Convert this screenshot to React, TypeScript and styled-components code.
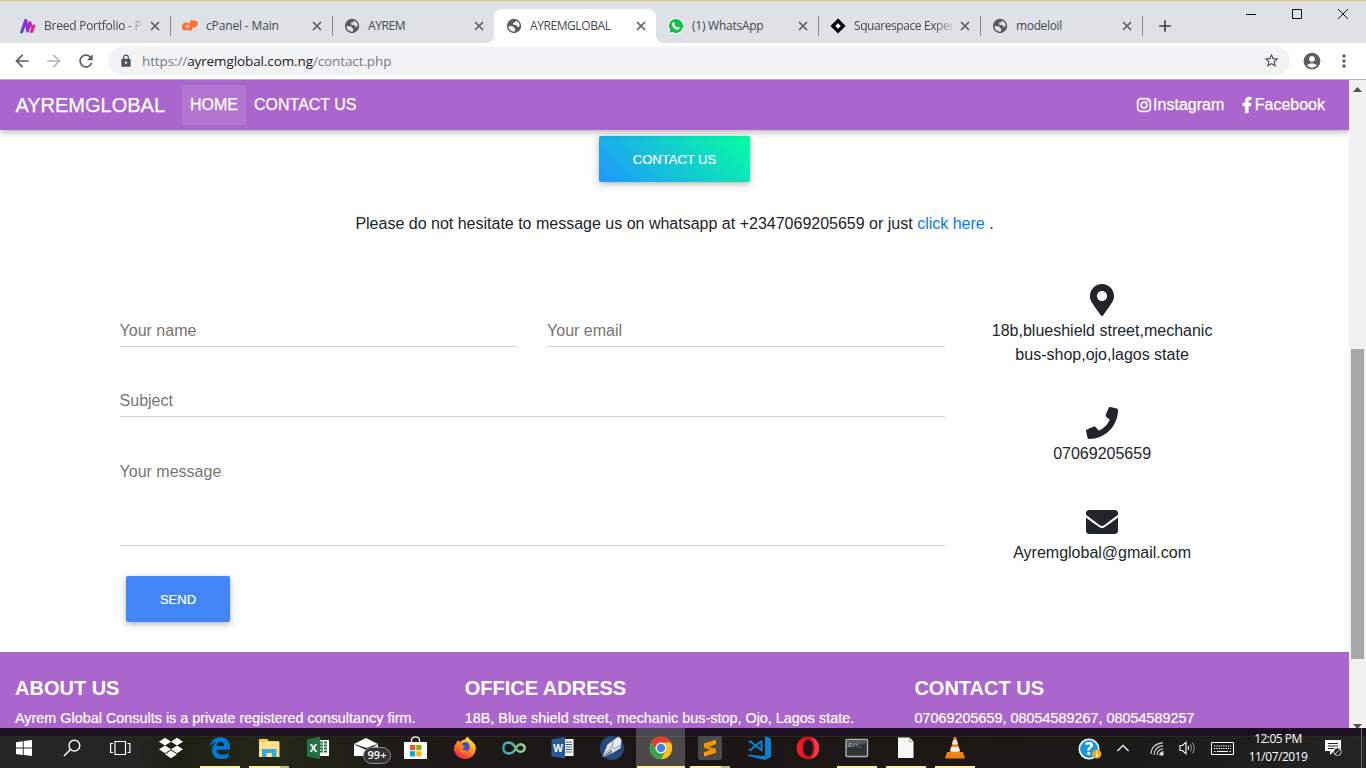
import React from "react";
import styled, { createGlobalStyle } from "styled-components";
import { FaInstagram, FaFacebookF, FaMapMarkerAlt, FaPhone, FaEnvelope, FaDropbox } from "react-icons/fa";
import { MdArrowBack, MdArrowForward, MdRefresh, MdLock, MdStarBorder, MdAccountCircle, MdMoreVert, MdAdd } from "react-icons/md";

const Global = createGlobalStyle`
  * { box-sizing: border-box; }
  body { margin: 0; overflow: hidden; background: #fff; }
`;

const ui = `"Open Sans", "Noto Sans", sans-serif`;
const body = `"Liberation Sans", Arial, sans-serif`;

const Screen = styled.div`
  width: 1366px;
  height: 768px;
  display: flex;
  flex-direction: column;
  overflow: hidden;
  font-family: ${body};
  color: #212529;
`;

/* ---------- browser chrome ---------- */
const TabStrip = styled.div`
  height: 43px;
  flex: none;
  display: flex;
  align-items: flex-end;
  background: #dee1e6;
  border-top: 1px solid #d9c762;
  padding-left: 8px;
  font-family: ${ui};
`;
const Tab = styled.div<{ $line?: boolean }>`
  position: relative;
  width: 162px;
  height: 34px;
  flex: none;
  display: flex;
  align-items: center;
  padding-left: 12px;
  &::after {
    content: "";
    position: absolute;
    right: -1px;
    top: 7px;
    width: 1px;
    height: 20px;
    background: ${(p) => (p.$line ? "#85888d" : "transparent")};
  }
  & > svg { flex: none; }
`;
const ActiveTab = styled(Tab)`
  border-radius: 8px 8px 0 0;
  background: #fff;
  &::before, &::after {
    content: "";
    position: absolute;
    top: auto;
    bottom: 0;
    width: 7px;
    height: 7px;
  }
  &::before {
    left: -7px;
    background: radial-gradient(circle at 0 0, transparent 6.5px, #fff 7px);
  }
  &::after {
    right: -7px;
    background: radial-gradient(circle at 100% 0, transparent 6.5px, #fff 7px);
  }
`;
const Favicon = styled.svg`
  width: 16px;
  height: 16px;
`;
const TabTitle = styled.div<{ $ls?: number; $fade?: boolean }>`
  width: 98px;
  margin-left: 8px;
  font-size: 12px;
  line-height: 16px;
  white-space: nowrap;
  color: #45494d;
  letter-spacing: ${(p) => p.$ls ?? 0}px;
  mask-image: ${(p) => (p.$fade ? "linear-gradient(90deg, #000 82%, transparent 104%)" : "none")};
`;
const CloseIcon = styled.svg`
  width: 14px;
  height: 14px;
  margin-left: 6px;
`;
const NewTab = styled(MdAdd)`
  width: 20px;
  height: 20px;
  margin: 0 0 7px 13px;
  color: #3c4043;
`;
const WindowButtons = styled.svg`
  width: 110px;
  height: 20px;
  margin: 0 10px 18px auto;
`;
const Toolbar = styled.div`
  height: 37px;
  flex: none;
  display: flex;
  align-items: center;
  padding: 0 12px 1px;
  background: #fff;
  border-bottom: 1px solid #b3b3b3;
  color: #5a5d61;
  & > svg { width: 20px; height: 20px; flex: none; margin-right: 12px; }
`;
const Omnibox = styled.div`
  flex: none;
  width: 1182px;
  height: 28px;
  display: flex;
  align-items: center;
  border-radius: 14px;
  background: #f1f3f4;
  padding: 0 10px 0 11px;
  margin-right: 12px;
  font: 13.5px/20px ${ui};
  color: #777b80;
  & > svg { color: #505357; }
`;
const Url = styled.span`
  margin-left: 9px;
  flex: 1;
  letter-spacing: -0.11px;
  b { font-weight: 400; color: #202124; }
`;

/* ---------- page ---------- */
const Viewport = styled.div`
  height: 648px;
  flex: none;
  display: flex;
`;
const Page = styled.div`
  width: 1349px;
  display: flex;
  flex-direction: column;
  overflow: hidden;
`;
const Navbar = styled.nav`
  position: relative;
  height: 50px;
  flex: none;
  display: flex;
  align-items: center;
  padding: 0 24px 0 15.4px;
  background: #aa66cc;
  color: #fff;
  font-size: 16px;
  -webkit-text-stroke: 0.25px #fff;
  box-shadow: 0 2px 5px rgba(0, 0, 0, 0.18), 0 2px 10px rgba(0, 0, 0, 0.14);
`;
const Brand = styled.span`
  width: 150.6px;
  margin-right: 16px;
  font-size: 20px;
  white-space: nowrap;
`;
const NavItem = styled.span<{ $active?: boolean }>`
  padding: 8px;
  line-height: 24px;
  background: ${(p) => (p.$active ? "rgba(255,255,255,.1)" : "transparent")};
`;
const Social = styled.span<{ $icon: number }>`
  display: flex;
  align-items: center;
  gap: 2.5px;
  margin-left: 18px;
  svg { width: ${(p) => p.$icon}px; height: 16px; stroke: #fff; stroke-width: 14px; overflow: visible; }
`;
const Spacer = styled.div`
  flex: 1;
`;
const Button = styled.button<{ $gradient?: boolean }>`
  display: block;
  flex: none;
  width: ${(p) => (p.$gradient ? 151 : 104)}px;
  height: 46px;
  padding: 1px 0 0;
  border: 0;
  border-radius: 2px;
  color: #fff;
  font: 13px/21px ${body};
  -webkit-text-stroke: 0.2px #fff;
  background: ${(p) => (p.$gradient ? "linear-gradient(45deg, #2096ff, #05ffa3)" : "#4285f4")};
  box-shadow: 0 2px 5px rgba(0, 0, 0, 0.18), 0 2px 10px rgba(0, 0, 0, 0.14);
`;
const Intro = styled.section`
  height: 154px;
  flex: none;
  display: flex;
  flex-direction: column;
  align-items: center;
  padding-top: 6px;
`;
const Lead = styled.p`
  margin: 30px 0 0;
  font-size: 16px;
  line-height: 24px;
  a { color: #007bff; }
`;
const ContactArea = styled.section`
  height: 368px;
  flex: none;
  display: flex;
  padding-left: 119.6px;
`;
const Form = styled.form`
  width: 825px;
  display: flex;
  flex-direction: column;
  gap: 35px;
  padding-top: 28px;
`;
const FieldRow = styled.div`
  display: flex;
  gap: 30px;
`;
const Field = styled.label<{ $tall?: boolean }>`
  display: block;
  flex: 1;
  height: ${(p) => (p.$tall ? 94 : 35)}px;
  padding-top: ${(p) => (p.$tall ? 8 : 7)}px;
  border-bottom: 1px solid #ced4da;
  font-size: 16px;
  line-height: 24px;
  color: #757575;
`;
const SendRow = styled.div`
  margin-top: -5px;
  padding-left: 6.4px;
`;
const Details = styled.div`
  width: 315px;
  display: flex;
  flex-direction: column;
  align-items: center;
  text-align: center;
  font-size: 16px;
  line-height: 24px;
`;
const Detail = styled.div<{ $gap: number }>`
  display: flex;
  flex-direction: column;
  align-items: center;
  margin-bottom: ${(p) => p.$gap}px;
  svg { width: 32px; height: 32px; margin-bottom: 3px; }
`;
const Footer = styled.footer`
  flex: 1;
  display: flex;
  padding: 24px 15px 0;
  background: #aa66cc;
  color: #fff;
`;
const FooterColumn = styled.div`
  width: 449.7px;
  flex: none;
  h5 { margin: 0 0 8px; font: bold 20px/24px ${body}; }
  p { margin: 0; font-size: 14.4px; line-height: 21.6px; white-space: nowrap; -webkit-text-stroke: 0.2px #fff; }
`;
const Scrollbar = styled.div`
  width: 17px;
  display: flex;
  flex-direction: column;
  align-items: center;
  background: #f1f1f1;
  & > svg { flex: none; width: 9px; height: 5px; margin-top: 7px; }
  & > svg:last-child { margin-top: 65px; }
`;
const Thumb = styled.div`
  flex: none;
  width: 13px;
  height: 310px;
  margin-top: 257px;
  background: #a8a8a8;
`;

/* ---------- taskbar ---------- */
const Taskbar = styled.div`
  position: relative;
  height: 40px;
  flex: none;
  display: flex;
  background: linear-gradient(#1c1020 0 8px, #2a2a14 8px 9px, transparent 9px),
    linear-gradient(90deg, #262626 0, #242524 10%, #1d2113 13%, #252718 20%, #1d1a18 30%, #1b1615 50%, #1d1715 72%, #1a1b1b 85%, #242424 100%);
  font-family: ${ui};
  color: #fff;
`;
const Task = styled.div<{ $w?: number; $run?: boolean; $focus?: boolean; $stack?: boolean }>`
  position: relative;
  width: ${(p) => p.$w ?? 49}px;
  height: 40px;
  flex: none;
  display: flex;
  align-items: center;
  justify-content: center;
  background: ${(p) => (p.$focus ? "rgba(255,255,255,.22)" : "transparent")};
  & > svg { width: 24px; height: 24px; overflow: visible; }
  &::after {
    content: "";
    position: absolute;
    left: ${(p) => (p.$focus ? 1 : 5)}px;
    bottom: 0;
    width: ${(p) => (p.$focus ? 48 : p.$run ? 40 : 0)}px;
    height: 2px;
    background: ${(p) => (p.$stack ? "linear-gradient(90deg, #fdf1a8 31px, #bdb788 31px)" : "#fdf1a8")};
  }
`;
const Count = styled.span`
  position: absolute;
  left: 21px;
  top: 19px;
  width: 28px;
  height: 17px;
  border: 1px solid #8c8c8c;
  border-radius: 9px;
  background: #333;
  font: 600 11px/14px ${ui};
  text-align: center;
`;
const Tray = styled.div`
  display: flex;
  align-items: center;
  margin-left: auto;
`;
const TrayItem = styled.div<{ $w: number }>`
  width: ${(p) => p.$w}px;
  display: flex;
  justify-content: center;
  flex: none;
  svg { overflow: visible; }
`;
const Clock = styled.div`
  width: 72px;
  font-size: 12px;
  line-height: 18px;
  text-align: center;
  white-space: nowrap;
  letter-spacing: -0.5px;
`;
const ShowDesktop = styled.div`
  width: 5px;
  height: 40px;
  margin-left: 9px;
  border-left: 1px solid #6b6b6b;
`;

const CloseTab = () => (
  <CloseIcon viewBox="0 0 14 14">
    <path d="M3 3L11 11M11 3L3 11" fill="none" stroke="#5a5d61" strokeWidth="1.7" />
  </CloseIcon>
);

const Globe = ({ bg = "#dee1e6" }: { bg?: string }) => (
  <Favicon viewBox="0 0 16 16">
    <circle cx="8" cy="8" r="7.2" fill="#5a5d61" />
    <path d="M2.3 8.2L6.2 8.2Q8.3 8.6 8.3 10.2L9.3 10.8L8.6 13.7Q3.2 13.6 2.3 8.2Z" fill={bg} />
    <path d="M9.6 2.5Q13.4 4 13.7 7.6L12.4 9.2Q11 8.8 10.6 7.2L7.4 6.7Q6.2 5.6 7.6 4.6L9.6 4.2Z" fill={bg} />
  </Favicon>
);

const ContactDetail = ({ icon, lines, gap }: { icon: React.ReactNode; lines: string[]; gap: number }) => (
  <Detail $gap={gap}>
    {icon}
    {lines.map((l) => (
      <span key={l}>{l}</span>
    ))}
  </Detail>
);

const BrowserTabs = () => (
  <TabStrip>
    <Tab $line>
      <Favicon viewBox="0 0 16 16">
        <defs>
          <linearGradient id="breed" gradientUnits="userSpaceOnUse" x1="1" x2="15" y1="0" y2="0">
            <stop stopColor="#4a45e8" />
            <stop offset=".5" stopColor="#a52cc0" />
            <stop offset="1" stopColor="#ff1d8e" />
          </linearGradient>
        </defs>
        <path d="M1.7 14L5.8 2.3L7.6 13L10 4.6L10.8 8M11.6 13.6L13.8 8" fill="none" stroke="url(#breed)" strokeWidth="3" strokeLinecap="round" strokeLinejoin="round" />
      </Favicon>
      <TabTitle $fade $ls={-0.24}>Breed Portfolio - P</TabTitle>
      <CloseTab />
    </Tab>
    <Tab $line>
      <Favicon viewBox="0 0 16 16">
        <g fill="#ff6c2c" stroke="#ff6c2c" strokeWidth=".9" fontFamily="Open Sans" fontWeight="800" fontStyle="italic">
          <text x="0" y="12.2" fontSize="12" textLength="6.6" lengthAdjust="spacingAndGlyphs">c</text>
          <text x="6.6" y="12.4" fontSize="12.5" textLength="9" lengthAdjust="spacingAndGlyphs">P</text>
        </g>
      </Favicon>
      <TabTitle $ls={-0.15}>cPanel - Main</TabTitle>
      <CloseTab />
    </Tab>
    <Tab>
      <Globe />
      <TabTitle $ls={-0.4}>AYREM</TabTitle>
      <CloseTab />
    </Tab>
    <ActiveTab>
      <Globe bg="#fff" />
      <TabTitle $ls={-0.42}>AYREMGLOBAL</TabTitle>
      <CloseTab />
    </ActiveTab>
    <Tab $line>
      <Favicon viewBox="0 0 16 16">
        <path d="M8 0A8 8 0 1 1 4.2 15L0 16L1.1 12A8 8 0 0 1 8 0Z" fill="#fff" />
        <path d="M8 1A7 7 0 1 1 4.4 14L1.3 14.8L2.1 11.8A7 7 0 0 1 8 1Z" fill="#12c14b" />
        <path d="M5 4.3L6.3 4.2L7 6.1L6.3 7Q7.2 8.8 9 9.6L9.9 8.8L11.8 9.8Q11.4 12 9.2 11.7Q5.2 10.8 4.2 6.9Q4 5.2 5 4.3Z" fill="#fff" />
      </Favicon>
      <TabTitle $ls={-0.25}>(1) WhatsApp</TabTitle>
      <CloseTab />
    </Tab>
    <Tab $line>
      <Favicon viewBox="0 0 16 16">
        <path d="M8 2.8L13.2 8L8 13.2L2.8 8Z" fill="#fff" stroke="#000" strokeWidth="3.4" />
      </Favicon>
      <TabTitle $fade $ls={-0.42}>Squarespace Exper</TabTitle>
      <CloseTab />
    </Tab>
    <Tab $line>
      <Globe />
      <TabTitle $ls={-0.35}>modeloil</TabTitle>
      <CloseTab />
    </Tab>
    <NewTab />
    <WindowButtons viewBox="0 0 110 20" fill="none" stroke="#111">
      <path d="M0 9.5H10M46.5 4.5H55.5V13.5H46.5Z" />
      <path d="M92 4L102 14M102 4L92 14" />
    </WindowButtons>
  </TabStrip>
);

const TaskButtons = () => (
  <>
    <Task $w={48}>
      <svg viewBox="0 0 24 24" fill="#fff">
        <path d="M4 6.2L10.8 5.2V11.6H4ZM11.7 5.1L20 4V11.6H11.7ZM4 12.4H10.8V18.9L4 17.9ZM11.7 12.4H20V20L11.7 19Z" />
      </svg>
    </Task>
    <Task $w={48}>
      <svg viewBox="0 0 24 24" fill="none" stroke="#fff" strokeWidth="1.4">
        <circle cx="14.4" cy="9.6" r="5.4" />
        <path d="M10.5 13.5L4 20" />
      </svg>
    </Task>
    <Task $w={50}>
      <svg viewBox="0 0 24 24" fill="none" stroke="#fff" strokeWidth="1.2">
        <path d="M6 5.5H16.5V18.5H6ZM4 7.5H1.6V16.5H4M18.5 7.5H20.9V16.5H18.5" />
      </svg>
    </Task>
    <Task>
      <FaDropbox />
    </Task>
    <Task $run>
      <svg viewBox="0 0 24 24">
        <path
          fill="#0078d7"
          d="M2 10.6C3 4.4 7 1.2 12.3 1.2C18.6 1.2 22 5.6 22 11.2V13.8H8.4C8.6 17.4 11.4 18.8 14.6 18.8C17 18.8 19 18.1 20.6 17.1V21.4C18.7 22.4 16.4 23 13.6 23C7.6 23 3.9 19.4 3.9 14.2C3.9 10.6 5.8 7.8 9 6.3C6 6.8 3.6 8.2 2 10.6ZM8.6 10H16C16 7.3 14.8 5.8 12.5 5.8C10.3 5.8 8.9 7.4 8.6 10Z"
        />
      </svg>
    </Task>
    <Task $run $stack>
      <svg viewBox="0 0 24 24">
        <path d="M2 3H10L12 5H22V20H2Z" fill="#f6c94c" />
        <path d="M2 6H22.5V21H2Z" fill="#fde08a" />
        <path d="M5 21V13H19.5V21H15V17H9.5V21Z" fill="#35a9e0" />
      </svg>
    </Task>
    <Task>
      <svg viewBox="0 0 24 24">
        <path d="M12 4H23V20H12Z" fill="#fff" />
        <path d="M14 6.5H17M18 6.5H21M14 9.5H17M18 9.5H21M14 12.5H17M18 12.5H21M14 15.5H17M18 15.5H21" stroke="#217346" strokeWidth="2" />
        <path d="M1 3.2L14 1V23L1 20.8Z" fill="#217346" />
        <text x="7.3" y="16" textAnchor="middle" fontFamily="Open Sans" fontWeight="700" fontSize="11" fill="#fff">X</text>
      </svg>
    </Task>
    <Task>
      <svg viewBox="0 0 24 24">
        <path d="M-1 8L11 2L23 8V20H-1Z" fill="#fff" />
        <path d="M-1 8.4L23 8.4L11.5 14Z" fill="#1e1a18" />
        <path d="M1 8.4L11 3.4L21 8.4L11.5 12Z" fill="#fff" />
      </svg>
      <Count>99+</Count>
    </Task>
    <Task>
      <svg viewBox="0 0 24 24">
        <path d="M7.5 8V4Q8 .8 11.5 .8T15.5 4V8" fill="none" stroke="#fff" strokeWidth="1.3" />
        <path d="M0 6H23V22Q23 23 22 23H1Q0 23 0 22Z" fill="#fff" />
        <path d="M6 9H11.2V14.2H6Z" fill="#f25022" />
        <path d="M12.2 9H17.4V14.2H12.2Z" fill="#7fba00" />
        <path d="M6 15.2H11.2V20.4H6Z" fill="#00a4ef" />
        <path d="M12.2 15.2H17.4V20.4H12.2Z" fill="#ffb900" />
      </svg>
    </Task>
    <Task>
      <svg viewBox="0 0 24 24">
        <defs>
          <linearGradient id="fire" x1=".85" y1=".05" x2=".25" y2="1">
            <stop stopColor="#fff14f" />
            <stop offset=".35" stopColor="#ffad1f" />
            <stop offset=".7" stopColor="#ff5a2b" />
            <stop offset="1" stopColor="#e8186d" />
          </linearGradient>
        </defs>
        <path d="M5 4.5L7 6Q9 3.8 12 3.5Q13 1.5 15 .8Q15.6 3 18 4.5Q23.3 8 22.8 13.5Q21.6 22.4 12.2 23Q3.2 22.6 1 14.5Q.6 9 3.2 7.2Q3.6 5 5 4.5Z" fill="url(#fire)" />
        <path d="M9 7.5Q12.4 4.6 15.3 7Q17.7 10.4 16 13.5Q13.5 17 9.5 15Q7.2 13.2 8.8 12L12 11.2L9.2 9.5Z" fill="#3f51b8" />
        <path d="M4.5 7.5L8.6 8L12 11Q10 12 9.5 13.2Q11.3 15 14.6 14Q11.8 18 7.6 16.4Q3.6 13.5 4.5 7.5Z" fill="#ff7b25" />
      </svg>
    </Task>
    <Task>
      <svg viewBox="0 0 24 24">
        <defs>
          <linearGradient id="loop" gradientUnits="userSpaceOnUse" x1="0" x2="24" y1="0" y2="0">
            <stop stopColor="#2a9fc0" />
            <stop offset="1" stopColor="#a3d97c" />
          </linearGradient>
        </defs>
        <path d="M13.8 12.5Q11 17.8 6.6 17.5Q1.3 16.8 1.3 12Q1.5 6.8 6.6 6.5Q10 6.6 12.4 10Q15 15.8 18.5 15.8Q22.6 15.5 22.7 12Q22.5 8.5 18.7 8.2Q15.5 8.4 13.8 12.5" fill="none" stroke="url(#loop)" strokeWidth="2.4" />
      </svg>
    </Task>
    <Task>
      <svg viewBox="0 0 24 24">
        <path d="M12 3H22.5V20H12Z" fill="#fff" />
        <path d="M14.5 6H21M14.5 8.5H21M14.5 11H21M14.5 13.5H21M14.5 16H21" stroke="#2b579a" strokeWidth="1.1" />
        <path d="M.5 3.2L14 1V22.5L.5 20.4Z" fill="#2b579a" />
        <text x="7.1" y="15.6" textAnchor="middle" fontFamily="Open Sans" fontWeight="700" fontSize="10" fill="#fff">W</text>
      </svg>
    </Task>
    <Task>
      <svg viewBox="0 0 24 24">
        <circle cx="12" cy="12" r="12" fill="#254a80" />
        <path d="M2.5 21L7.5 8.5L18.5 .5L21.5 3.5L20.5 12L12 17.5Z" fill="#e6e8eb" />
        <path d="M2.5 21L12 13.2V17.5Z" fill="#70879f" />
        <path d="M13 4.5L12 10.5L14.5 13L20.8 9M3 20.5L12 10.5" stroke="#8a9097" fill="none" />
      </svg>
    </Task>
    <Task $focus>
      <svg viewBox="0 0 24 24">
        <circle cx="12" cy="12" r="11.2" fill="#fbc116" />
        <path d="M2.3 6.4A11.2 11.2 0 0 1 21.7 6.4H12A5.6 5.6 0 0 0 7.2 14.8Z" fill="#e33b2e" />
        <path d="M2.3 6.4A11.2 11.2 0 0 0 12 23.2L16.8 14.8A5.6 5.6 0 0 1 7.2 14.8Z" fill="#32a350" />
        <circle cx="12" cy="12" r="5.4" fill="#fff" />
        <circle cx="12" cy="12" r="4.3" fill="#4285f4" />
      </svg>
    </Task>
    <Task $run $stack>
      <svg viewBox="0 0 24 24">
        <rect width="24" height="24" rx="2" fill="#4a4a4a" />
        <path d="M18 3.8V8.2L10.5 10.7L18 13V16.8L6 20.5V16.2L13.7 13.7L6 11.4V7.5Z" fill="#ff9800" />
        <path d="M10.5 10.7L18 13V16.8L6 11.4V9.5Z" fill="#f28a00" />
      </svg>
    </Task>
    <Task>
      <svg viewBox="0 0 24 24">
        <path d="M18 0L24 2.2V21L18 24L1 20V18.6L18 20Z" fill="#0b7fd0" />
        <path d="M14.5 4.8V14.2L3.2 5.2L1.8 6.2M1.8 13.2L3.2 14.2L14.5 4.8" fill="none" stroke="#0b7fd0" strokeWidth="2" />
      </svg>
    </Task>
    <Task>
      <svg viewBox="0 0 24 24">
        <defs>
          <linearGradient id="opera" x1="0" x2="1">
            <stop stopColor="#ff1b2d" />
            <stop offset="1" stopColor="#a70014" />
          </linearGradient>
        </defs>
        <path fillRule="evenodd" d="M12 .8C5.5.8 .7 5.5 .7 12S5.5 23.2 12 23.2 23.3 18.5 23.3 12 18.5.8 12 .8ZM12 3.8C15 3.8 16.8 7.3 16.8 12S15 20.2 12 20.2 7.2 16.7 7.2 12 9 3.8 12 3.8Z" fill="url(#opera)" />
        <path d="M13.5 1.2Q23.2 2.2 23.2 12T13.5 22.8Q18.5 20 18.5 12T13.5 1.2Z" fill="#f0394a" />
      </svg>
    </Task>
    <Task $run>
      <svg viewBox="0 0 24 24">
        <rect x="1" y="3.5" width="21.5" height="17" rx="1" fill="#303334" stroke="#aeb3b5" strokeWidth="1.4" />
        <path d="M2 12L22 7V4.5H2Z" fill="#555a5c" />
        <text x="3.5" y="10.5" fontFamily="Liberation Mono" fontSize="5.5" fill="#d7d7d7">C:\_</text>
      </svg>
    </Task>
    <Task $run>
      <svg viewBox="0 0 24 24">
        <path d="M4 1.5H15.5L19.5 5.5V22H4Z" fill="#f7f7f7" />
        <path d="M15.5 1.5V5.5H19.5Z" fill="#fff" stroke="#888" strokeWidth=".8" />
      </svg>
    </Task>
    <Task $run>
      <svg viewBox="0 0 24 24">
        <path d="M4 16H20L22 22.5H2Z" fill="#f08010" />
        <path d="M11 1H13L17.5 17Q12 20.2 6.5 17Z" fill="#f58a12" />
        <path d="M10.2 4H13.8L14.9 7.8Q12 9 9.1 7.8ZM8.2 11H15.8L16.9 14.8Q12 17.2 7.1 14.8Z" fill="#eee" />
      </svg>
    </Task>
  </>
);

const SystemTray = () => (
  <Tray>
    <TrayItem $w={34}>
      <svg width="22" height="22" viewBox="0 0 22 22">
        <circle cx="11" cy="12" r="9.7" fill="#1798d8" stroke="#fff" strokeWidth="1.6" />
        <text x="11" y="18" textAnchor="middle" fontFamily="Open Sans" fontWeight="700" fontSize="17" fill="#fff">?</text>
        <circle cx="18.7" cy="17" r="4.6" fill="#f5a81c" />
        <path d="M18.7 14V15.2M18.7 16.2V20" stroke="#fff" strokeWidth="1.4" />
      </svg>
    </TrayItem>
    <TrayItem $w={34}>
      <svg width="14" height="14" viewBox="0 0 14 14" fill="none" stroke="#fff" strokeWidth="1.3">
        <path d="M1.4 10L7 4.4L12.6 10" />
      </svg>
    </TrayItem>
    <TrayItem $w={33}>
      <svg width="14" height="14" viewBox="0 0 14 14" fill="none" stroke="#c9c9c9" strokeWidth="1.2">
        <path d="M1 13Q1.5 3 13 1.6M4 14Q4.4 5.8 13 4.6M7 14Q7.2 8.4 13 7.8" />
        <path d="M9.8 14Q10 11.2 13 10.8V14Z" fill="#fff" />
      </svg>
    </TrayItem>
    <TrayItem $w={29}>
      <svg width="17" height="14" viewBox="0 0 17 14" fill="none" stroke="#fff" strokeWidth="1.1">
        <path d="M1 4.5H3.5L7 1.2V12.8L3.5 9.5H1Z" />
        <path d="M9 5Q10.3 7 9 9" />
        <path d="M11.2 3.4Q13.6 7 11.2 10.6M13.4 1.6Q17 7 13.4 12.4" stroke="#8d8d8d" />
      </svg>
    </TrayItem>
    <TrayItem $w={40}>
      <svg width="23" height="13" viewBox="0 0 23 13" fill="none" stroke="#fff">
        <path d="M.5 .5H22.5V12.5H.5Z" />
        <path d="M3 4H20M3 6.5H20" strokeDasharray="1.3 1" strokeWidth="1.2" />
        <path d="M3 9.5H4.5M6 9.5H17M18.5 9.5H20" />
      </svg>
    </TrayItem>
    <Clock>
      <div>12:05 PM</div>
      <div>11/07/2019</div>
    </Clock>
    <TrayItem $w={38}>
      <svg width="17" height="16" viewBox="0 0 17 16">
        <path d="M0 0H16V11H9L5 15V11H0Z" fill="#fff" />
        <path d="M3 3.5H13M3 6H13M3 8.5H9" stroke="#242424" strokeWidth="1.1" />
        <circle cx="12.5" cy="11.7" r="3.8" fill="#242424" stroke="#ccc" />
        <path d="M10 14.3L15 9.2" stroke="#ccc" />
      </svg>
    </TrayItem>
    <ShowDesktop />
  </Tray>
);

const App = () => (
  <Screen>
    <Global />
    <BrowserTabs />
    <Toolbar>
      <MdArrowBack />
      <MdArrowForward color="#b5b7b9" />
      <MdRefresh />
      <Omnibox>
        <MdLock size={14} />
        <Url>
          https://<b>ayremglobal.com.ng</b>/contact.php
        </Url>
        <MdStarBorder size={17} />
      </Omnibox>
      <MdAccountCircle />
      <MdMoreVert />
    </Toolbar>

    <Viewport>
      <Page>
        <Navbar>
          <Brand>AYREMGLOBAL</Brand>
          <NavItem $active>HOME</NavItem>
          <NavItem>CONTACT US</NavItem>
          <Spacer />
          <Social $icon={14}>
            <FaInstagram /> Instagram
          </Social>
          <Social $icon={10}>
            <FaFacebookF /> Facebook
          </Social>
        </Navbar>
        <Intro>
          <Button $gradient>CONTACT US</Button>
          <Lead>
            Please do not hesitate to message us on whatsapp at +2347069205659 or just <a>click here</a> .
          </Lead>
        </Intro>
        <ContactArea>
          <Form>
            <FieldRow>
              <Field>Your name</Field>
              <Field>Your email</Field>
            </FieldRow>
            <FieldRow>
              <Field>Subject</Field>
            </FieldRow>
            <FieldRow>
              <Field $tall>Your message</Field>
            </FieldRow>
            <SendRow>
              <Button type="button">SEND</Button>
            </SendRow>
          </Form>
          <Details>
            <ContactDetail icon={<FaMapMarkerAlt />} lines={["18b,blueshield street,mechanic", "bus-shop,ojo,lagos state"]} gap={40} />
            <ContactDetail icon={<FaPhone />} lines={["07069205659"]} gap={40} />
            <ContactDetail icon={<FaEnvelope />} lines={["Ayremglobal@gmail.com"]} gap={0} />
          </Details>
        </ContactArea>
        <Footer>
          <FooterColumn>
            <h5>ABOUT US</h5>
            <p>Ayrem Global Consults is a private registered consultancy firm.</p>
          </FooterColumn>
          <FooterColumn>
            <h5>OFFICE ADRESS</h5>
            <p>18B, Blue shield street, mechanic bus-stop, Ojo, Lagos state.</p>
          </FooterColumn>
          <FooterColumn>
            <h5>CONTACT US</h5>
            <p>07069205659, 08054589267, 08054589257</p>
          </FooterColumn>
        </Footer>
      </Page>
      <Scrollbar>
        <svg viewBox="0 0 9 5"><path d="M0 5L4.5 0L9 5Z" fill="#505050" /></svg>
        <Thumb />
        <svg viewBox="0 0 9 5"><path d="M0 0L4.5 5L9 0Z" fill="#505050" /></svg>
      </Scrollbar>
    </Viewport>

    <Taskbar>
      <TaskButtons />
      <SystemTray />
    </Taskbar>
  </Screen>
);

export default App;
